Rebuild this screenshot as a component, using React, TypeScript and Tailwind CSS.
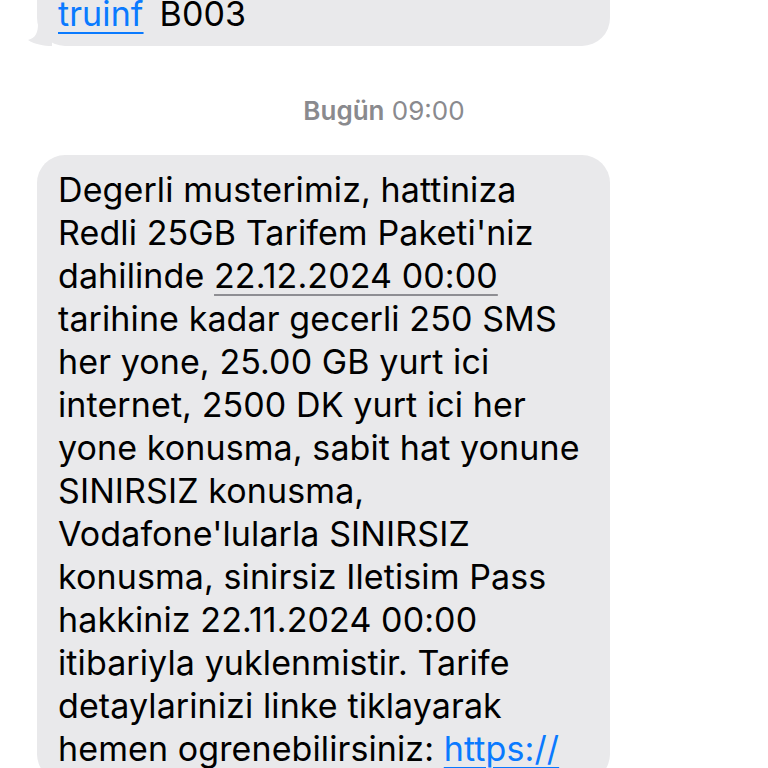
const lines: React.ReactNode[] = [
  'Degerli musterimiz, hattiniza',
  "Redli 25GB Tarifem Paketi'niz",
  <>
    dahilinde{' '}
    <span className="underline decoration-[#8e8e93] decoration-2 underline-offset-[6px]">22.12.2024 00:00</span>
  </>,
  'tarihine kadar gecerli 250 SMS',
  'her yone, 25.00 GB yurt ici',
  'internet, 2500 DK yurt ici her',
  'yone konusma, sabit hat yonune',
  'SINIRSIZ konusma,',
  "Vodafone'lularla SINIRSIZ",
  'konusma, sinirsiz Iletisim Pass',
  'hakkiniz 22.11.2024 00:00',
  'itibariyla yuklenmistir. Tarife',
  'detaylarinizi linke tiklayarak',
  <>
    hemen ogrenebilirsiniz:{' '}
    <span className="text-[#0a7aff] underline decoration-2 underline-offset-[6px]">https://</span>
  </>,
];

function Tail() {
  return (
    <svg className="absolute -left-[9px] bottom-0" width="24" height="22" viewBox="0 0 24 22">
      <path d="M24 0 V22 C16 22 6 20 0 16 C8 14 10 8 10 0 Z" fill="#e9e9eb" />
    </svg>
  );
}

export default function App() {
  return (
    <div
      className="w-[768px] h-[768px] overflow-hidden bg-white text-black"
      style={{ fontFamily: 'Inter, "Liberation Sans", sans-serif' }}
    >
      <div className="relative ml-[37px] mt-[-52px] w-[573px] rounded-[28px] bg-[#e9e9eb] pl-[21px] pt-[44px] pb-[11px]">
        <Tail />
        <div className="relative text-[34px] leading-[43px] tracking-[0.1px] whitespace-nowrap">
          <span className="text-[#0a7aff] underline decoration-2 underline-offset-[6px]">truinf</span>
          <span className="ml-[16px]">B003</span>
        </div>
      </div>

      <div className="mt-[50px] text-center text-[26px] leading-[30px] text-[#8a8a8e]">
        <span className="font-semibold">Bugün</span> 09:00
      </div>

      <div className="ml-[37px] mt-[29px] w-[573px] rounded-[28px] bg-[#e9e9eb] pl-[21px] pt-[13px] pb-[12px]">
        <div className="text-[34px] leading-[43px] tracking-[0.1px] whitespace-nowrap">
          {lines.map((l, i) => (
            <div key={i}>{l}</div>
          ))}
        </div>
      </div>
    </div>
  );
}
